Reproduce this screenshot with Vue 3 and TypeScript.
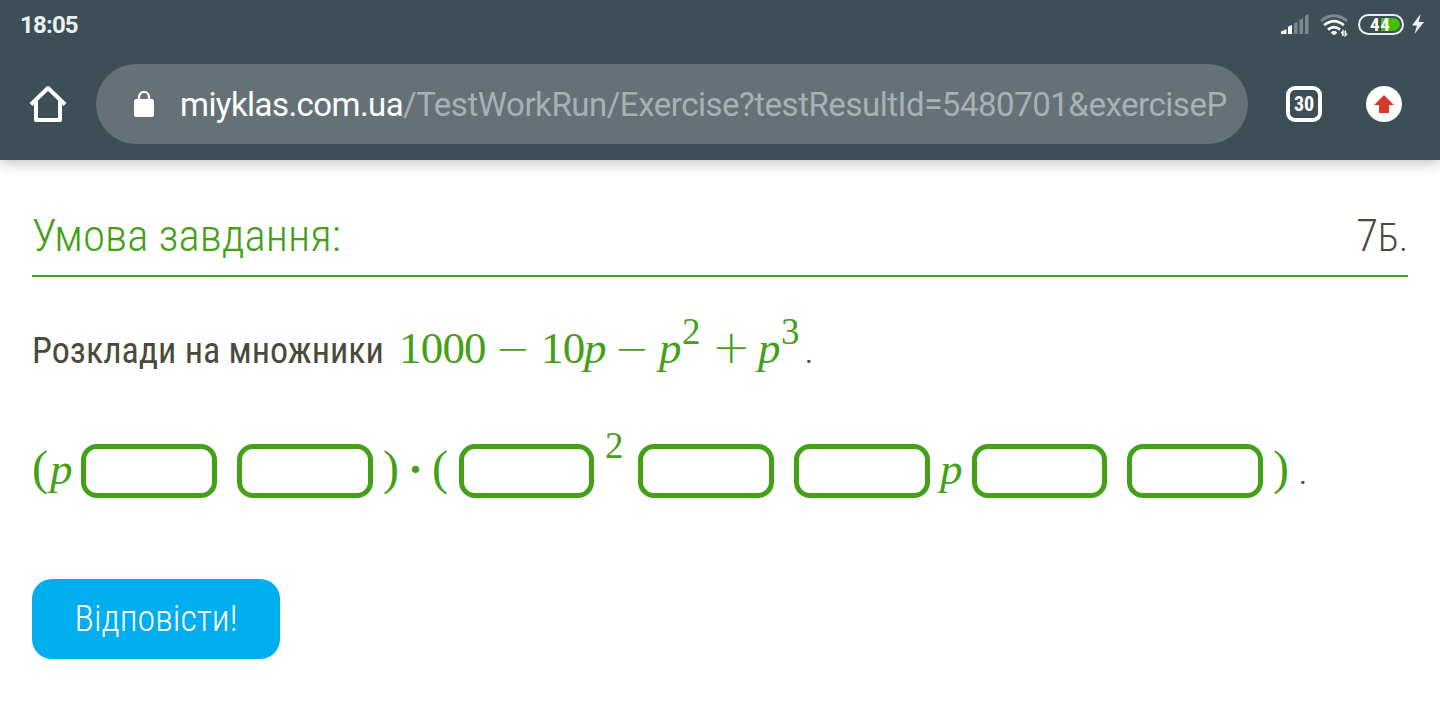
<template>
  <div class="screen">
    <header class="chrome">
      <div class="status">
        <span class="time">18:05</span>
        <div class="indicators">
          <svg class="signal" width="28" height="20" viewBox="0 0 28 20">
            <path d="M0 20V17.5L5.5 15.2V20Z" fill="#fff" />
            <path d="M7 20V12.8L11 11V20Z" fill="#fff" />
            <path d="M13 20V9.5L16.5 8V20ZM18.5 20V6L22 4V20ZM24 20V2L27.5 0V20Z" fill="#7b898e" />
          </svg>
          <svg class="wifi" width="29" height="23" viewBox="0 0 29 23">
            <g fill="none" stroke-width="2.8">
              <path d="M1 6.8Q14 -3.2 27 6.8" stroke="#7b898e" />
              <path d="M4.2 11.3Q14 3 23.8 11.3" stroke="#fff" />
              <path d="M8 15.6Q14 10.6 20 15.6" stroke="#fff" />
            </g>
            <path d="M10.8 18.2Q14 15.8 17.2 18.2Q16 21 14 21Q12 21 10.8 18.2Z" fill="#fff" />
            <path d="M22.9 22V17.2L21.2 19.2M25.3 16.5V21.5L27 19.5" fill="none" stroke="#fff" stroke-width="1.5" />
          </svg>
          <div class="battery">
            <span class="charge"></span>
            <span class="level">44</span>
          </div>
          <svg class="bolt" width="12" height="20" viewBox="0 0 12 20">
            <path d="M8.5 0L0 11.5H5L2.5 20L12 8H6.8Z" fill="#f1f5f6" />
          </svg>
        </div>
      </div>
      <div class="toolbar">
        <svg class="home" width="38" height="38" viewBox="0 0 38 38">
          <path d="M2 19.5L19 3L36 19.5M7 16V35H31V16" fill="none" stroke="#fff" stroke-width="4" stroke-linejoin="round" />
        </svg>
        <div class="address">
          <svg class="lock" width="20" height="26" viewBox="0 0 20 26">
            <path d="M5 9V6a5 5 0 0 1 10 0V9" fill="none" stroke="#fff" stroke-width="2.2" />
            <rect y="8" width="20" height="18" rx="2.5" fill="#fff" />
          </svg>
          <div class="url"><span class="host">miyklas.com.ua</span>/TestWorkRun/Exercise?testResultId=5480701&amp;exerciseP</div>
        </div>
        <div class="tabs">30</div>
        <div class="update">
          <svg width="20" height="18" viewBox="0 0 20 18">
            <path d="M10 0L20 10H15V18H5V10H0Z" fill="#d73a2d" />
          </svg>
        </div>
      </div>
    </header>

    <main class="content">
      <div class="heading">
        <h1>Умова завдання:</h1>
        <div class="points">7<small>Б.</small></div>
      </div>

      <div class="task">
        <span class="label">Розклади на множники</span>
        <span
          v-for="(t, i) in expression"
          :key="i"
          class="token"
          :class="t.kind"
          :style="{ width: t.width + 'px' }"
          >{{ t.text }}</span
        >
      </div>

      <div class="answer">
        <template v-for="(t, i) in answer" :key="i">
          <input
            v-if="t.kind === 'box'"
            v-model="values[i]"
            class="box"
            :style="{ width: t.width + 'px' }"
          />
          <span v-else class="token" :class="t.kind" :style="{ width: t.width + 'px' }">{{
            t.text
          }}</span>
        </template>
      </div>

      <button class="submit"><span>Відповісти!</span></button>
    </main>
  </div>
</template>

<script setup lang="ts">
import { ref } from 'vue'

type Kind =
  | 'num'
  | 'var'
  | 'minus'
  | 'plus'
  | 'sup'
  | 'paren'
  | 'dot'
  | 'end'
  | 'box'
  | 'gap'

interface Token {
  kind: Kind
  width: number
  text?: string
}

const expression: Token[] = [
  { kind: 'num', text: '1000', width: 96 },
  { kind: 'minus', text: '−', width: 46 },
  { kind: 'num', text: '10', width: 43 },
  { kind: 'var', text: 'p', width: 30 },
  { kind: 'minus', text: '−', width: 45 },
  { kind: 'var', text: 'p', width: 23 },
  { kind: 'sup', text: '2', width: 30 },
  { kind: 'plus', text: '+', width: 46 },
  { kind: 'var', text: 'p', width: 23 },
  { kind: 'sup', text: '3', width: 24 },
  { kind: 'end', text: '.', width: 10 },
]

const answer: Token[] = [
  { kind: 'paren', text: '(', width: 18 },
  { kind: 'var', text: 'p', width: 31 },
  { kind: 'box', width: 136 },
  { kind: 'gap', width: 20 },
  { kind: 'box', width: 136 },
  { kind: 'gap', width: 10 },
  { kind: 'paren', text: ')', width: 25 },
  { kind: 'dot', text: '·', width: 24 },
  { kind: 'paren', text: '(', width: 27 },
  { kind: 'box', width: 135 },
  { kind: 'gap', width: 11 },
  { kind: 'sup', text: '2', width: 33 },
  { kind: 'box', width: 136 },
  { kind: 'gap', width: 20 },
  { kind: 'box', width: 136 },
  { kind: 'gap', width: 10 },
  { kind: 'var', text: 'p', width: 32 },
  { kind: 'box', width: 135 },
  { kind: 'gap', width: 20 },
  { kind: 'box', width: 136 },
  { kind: 'gap', width: 10 },
  { kind: 'paren', text: ')', width: 26 },
  { kind: 'end', text: '.', width: 10 },
]

const values = ref<string[]>(answer.map(() => ''))
</script>

<style>
body {
  margin: 0;
  background: #fff;
}
</style>

<style scoped>
.screen {
  width: 1440px;
  height: 720px;
  overflow: hidden;
  background: #fff;
  font-family: Roboto, sans-serif;
}

.chrome {
  height: 160px;
  background: #3d4f56;
  box-shadow: 0 2px 14px rgba(0, 0, 0, 0.28);
}

.status {
  display: flex;
  align-items: center;
  justify-content: space-between;
  height: 50px;
  padding: 0 16px 0 20px;
}

.time {
  color: #e9f1f3;
  font-size: 24px;
  font-weight: 700;
  letter-spacing: -0.8px;
}

.indicators {
  display: flex;
  align-items: center;
  height: 48px;
  margin-bottom: 2px;
}

.signal {
  margin-right: 11px;
}

.wifi {
  margin: 2px 9px 0 0;
}

.battery {
  display: flex;
  align-items: center;
  justify-content: flex-end;
  box-sizing: border-box;
  width: 46px;
  height: 21px;
  margin-right: 8px;
  padding: 2px;
  border: 2px solid #e9eff1;
  border-radius: 11px;
}

.charge {
  width: 19px;
  height: 13px;
  border-radius: 0 7px 7px 0;
  background: #45bd0c;
}

.level {
  width: 22px;
  margin: 0 8px 0 -30px;
  color: #fff;
  font-size: 19px;
  font-stretch: 75%;
  font-weight: 700;
  letter-spacing: 0.6px;
  line-height: 15px;
}

.toolbar {
  display: flex;
  align-items: center;
  height: 108px;
}

.home {
  margin-left: 29px;
}

.address {
  display: flex;
  align-items: center;
  box-sizing: border-box;
  width: 1152px;
  height: 80px;
  margin-left: 29px;
  padding: 0 19px 0 38px;
  border-radius: 40px;
  background: #647278;
}

.lock {
  flex: none;
  margin-right: 26px;
}

.url {
  flex: 1;
  padding-top: 2px;
  overflow: hidden;
  color: #a7b0b4;
  font-size: 33px;
  letter-spacing: -0.47px;
  line-height: 44px;
  white-space: nowrap;
}

.host {
  color: #fff;
  letter-spacing: -0.56px;
}

.tabs {
  box-sizing: border-box;
  width: 36px;
  height: 36px;
  margin-left: 38px;
  border: 4px solid #fff;
  border-radius: 9px;
  color: #fff;
  font-size: 20px;
  font-stretch: 75%;
  font-weight: 700;
  line-height: 29px;
  text-align: center;
}

.update {
  display: flex;
  align-items: center;
  justify-content: center;
  width: 36px;
  height: 36px;
  margin-left: 44px;
  border-radius: 50%;
  background: #fff;
}

.content {
  padding: 40px 32px 0;
  font-family: 'Roboto Condensed', Roboto, sans-serif;
  font-stretch: 75%;
}

.heading {
  display: flex;
  align-items: baseline;
  justify-content: space-between;
  height: 75px;
  border-bottom: 2px solid #43a017;
  line-height: 71px;
  white-space: nowrap;
}

h1 {
  margin: 0;
  color: #43a017;
  font-size: 45px;
  font-weight: 300;
}

.points {
  color: #4a4a3c;
  font-size: 45px;
  font-weight: 300;
}

.points small {
  font-size: 38px;
}

.task {
  display: flex;
  align-items: baseline;
  height: 100px;
  padding-top: 39px;
  box-sizing: border-box;
  line-height: 70px;
  white-space: nowrap;
}

.label {
  width: 367px;
  color: #4a4a3c;
  font-size: 36px;
}

.token {
  flex: none;
  color: #43a017;
  font-family: 'Liberation Serif', serif;
  font-size: 45px;
  font-stretch: 100%;
  line-height: 60px;
  white-space: nowrap;
}

.num {
  letter-spacing: -0.8px;
}

.var {
  font-style: italic;
}

.minus,
.plus {
  font-family: 'DejaVu Sans', sans-serif;
  font-weight: 200;
}

.minus {
  font-size: 42px;
}

.plus {
  font-size: 46px;
}

.sup {
  position: relative;
  top: -19px;
  font-size: 37px;
}

.paren {
  font-size: 48px;
}

.dot {
  font-weight: 700;
}

.end {
  color: #4a4a3c;
  font-family: Roboto, sans-serif;
  font-size: 30px;
}

.answer {
  display: flex;
  align-items: baseline;
  height: 68px;
  margin-top: 61px;
}

.answer .sup {
  top: -26px;
}

.box {
  flex: none;
  align-self: flex-start;
  box-sizing: border-box;
  height: 54px;
  margin: 6px 0 0;
  padding: 0 8px;
  border: 5px solid #43a017;
  border-radius: 16px;
  background: #fff;
  color: #43a017;
  font-size: 30px;
  outline: none;
}

.gap {
  height: 1px;
}

.submit {
  width: 248px;
  height: 80px;
  margin-top: 73px;
  padding: 0;
  border: 0;
  border-radius: 20px;
  background: #00adef;
  color: #fff;
  font-family: inherit;
  font-size: 36px;
  font-stretch: 75%;
  font-weight: 300;
}
</style>
